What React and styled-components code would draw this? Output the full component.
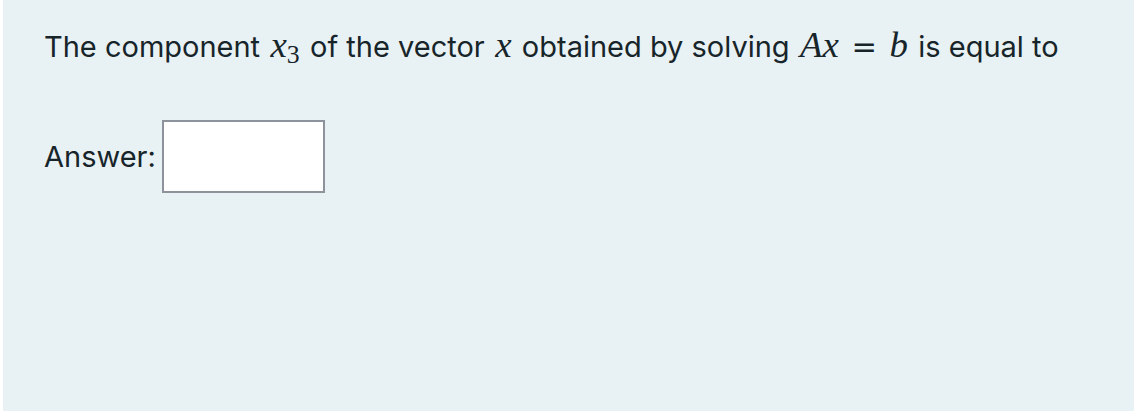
import React from "react";
import styled, { createGlobalStyle } from "styled-components";

const GlobalStyle = createGlobalStyle`
  html, body {
    margin: 0;
    padding: 0;
    background: #ffffff;
  }
  body {
    font-family: Inter, "Noto Sans", sans-serif;
  }
`;

const Page = styled.div`
  padding-left: 3px;
  width: 1134px;
  box-sizing: border-box;
`;

const Panel = styled.div`
  height: 411px;
  box-sizing: border-box;
  background: #e8f1f4;
  padding: 25px 0 0 41px;
  color: #17252a;
`;

const Question = styled.p`
  margin: 0;
  font-size: 29px;
  line-height: 40px;
  white-space: nowrap;
`;

const Math = styled.span`
  font-family: "Liberation Serif", "Times New Roman", serif;
  font-style: italic;
  font-size: 1.27em;
  margin: 0 0.06em;
`;

const Relation = styled.span`
  font-family: "DejaVu Sans", sans-serif;
  font-size: 1.05em;
  margin: 0 0.34em;
  line-height: 0;
`;

const Sub = styled.sub`
  font-style: normal;
  font-size: 0.7em;
  vertical-align: -0.25em;
  line-height: 0;
`;

const AnswerRow = styled.div`
  display: flex;
  align-items: center;
  gap: 6px;
  margin-top: 53px;
`;

const Label = styled.label`
  font-size: 29px;
`;

const AnswerInput = styled.input`
  width: 163px;
  height: 73px;
  box-sizing: border-box;
  border: 2px solid #8e939b;
  background: #ffffff;
  border-radius: 0;
  outline: none;
  font-family: Inter, sans-serif;
  font-size: 24px;
  padding: 0 10px;
`;

export default function App() {
  return (
    <Page>
      <GlobalStyle />
      <Panel>
        <Question>
          The component{" "}
          <Math>
            x<Sub>3</Sub>
          </Math>{" "}
          of the vector <Math>x</Math> obtained by solving{" "}
          <Math>Ax</Math>
          <Relation>=</Relation>
          <Math>b</Math> is equal to
        </Question>
        <AnswerRow>
          <Label htmlFor="answer">Answer:</Label>
          <AnswerInput id="answer" type="text" />
        </AnswerRow>
      </Panel>
    </Page>
  );
}
